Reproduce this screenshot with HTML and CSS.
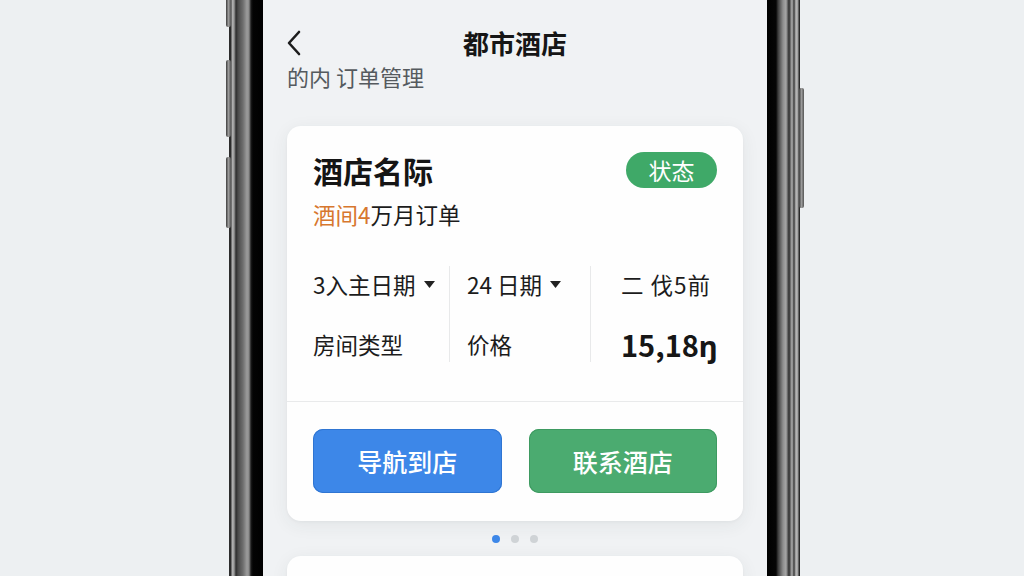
FILE: index.html
```html
<!DOCTYPE html>
<html lang="zh-CN">
<head>
<meta charset="utf-8">
<title>都市酒店</title>
<link rel="stylesheet" href="styles.css">
</head>
<body>
<div class="stage">
  <div class="phone">
    <span class="side-btn l1"></span>
    <span class="side-btn l2"></span>
    <span class="side-btn l3"></span>
    <span class="side-btn r1"></span>
    <div class="screen">
      <header class="topbar">
        <a class="back" aria-label="返回">
          <svg width="16" height="26" viewBox="0 0 16 26"><path d="M13 2 L3 13 L13 24" fill="none" stroke="#1c1c1c" stroke-width="2.6" stroke-linecap="round" stroke-linejoin="round"/></svg>
        </a>
        <h1 class="title">都市酒店</h1>
        <span></span>
      </header>
      <p class="subtitle">的内 订单管理</p>

      <section class="card">
        <div class="card-head">
          <h2 class="hotel">酒店名际</h2>
          <span class="pill">状态</span>
        </div>
        <p class="order"><span class="accent">酒间4</span>万月订单</p>

        <div class="info">
          <div class="col c1">
            <div class="cell">3入主日期 <svg class="caret" width="11" height="7" viewBox="0 0 11 7"><path d="M0 0 H11 L5.5 7 Z" fill="#222"/></svg></div>
            <div class="cell">房间类型</div>
          </div>
          <div class="col c2">
            <div class="cell">24 日期 <svg class="caret" width="11" height="7" viewBox="0 0 11 7"><path d="M0 0 H11 L5.5 7 Z" fill="#222"/></svg></div>
            <div class="cell">价格</div>
          </div>
          <div class="col c3">
            <div class="cell spaced">二 伐5前</div>
            <div class="cell price">15,18ŋ</div>
          </div>
        </div>

        <div class="actions">
          <button class="btn nav">导航到店</button>
          <button class="btn call">联系酒店</button>
        </div>
      </section>

      <div class="dots">
        <span class="dot active"></span>
        <span class="dot"></span>
        <span class="dot"></span>
      </div>

      <section class="card next"></section>
    </div>
  </div>
</div>
</body>
</html>
```

FILE: styles.css
```css
* { box-sizing: border-box; margin: 0; padding: 0; }

html, body {
  width: 1024px;
  height: 576px;
  overflow: hidden;
  background: #edf0f2;
  font-family: "Noto Sans CJK SC", "Noto Sans", sans-serif;
  color: #1c1c1c;
}

.stage {
  height: 576px;
  overflow: hidden;
  display: flex;
  padding-left: 229px;
}

.phone {
  position: relative;
  width: 571px;
  height: 700px;
  padding: 0 33px 0 34px;
  background: linear-gradient(to right,
    #2c2c2c 0px, #2c2c2c 2px, #b5b5b5 3px, #9a9a9a 5px, #2e2e2e 7px,
    #4a4a4a 9px, #6e6e6e 14px, #9c9c9c 18px, #8a8a8a 20px,
    #1a1a1a 22px, #030303 24px, #000 34px,
    #000 538px, #050505 547px, #3a3a3a 549px, #8e8e8e 554px,
    #a6a6a6 557px, #2c2c2c 560px, #b0b0b0 563px, #3a3a3a 565px,
    #bcbcbc 567px, #9a9a9a 569px, #2a2a2a 570px, #2a2a2a 571px);
}

.side-btn {
  position: absolute;
  width: 5px;
  background: linear-gradient(to right, #3c3c3c, #9a9a9a 50%, #555);
  border-radius: 2px;
}
.side-btn.l1 { left: -3px; top: -10px; height: 37px; }
.side-btn.l2 { left: -3px; top: 60px; height: 77px; }
.side-btn.l3 { left: -3px; top: 157px; height: 71px; }
.side-btn.r1 { right: -4px; top: 88px; height: 120px; }

.screen {
  height: 100%;
  background: #f0f2f4;
  padding: 27px 24px 0;
}

.topbar {
  display: grid;
  grid-template-columns: 1fr auto 1fr;
  align-items: center;
  height: 32px;
}
.back { display: flex; align-items: center; margin-left: -1px; }
.title {
  font-size: 26px;
  font-weight: 700;
  line-height: 32px;
  color: #161616;
}

.subtitle {
  margin-top: 3px;
  font-size: 22px;
  line-height: 28px;
  color: #555a5e;
}

.card {
  margin-top: 36px;
  background: #fefefe;
  border-radius: 14px;
  box-shadow: 0 4px 18px rgba(40, 50, 60, 0.07), 0 1px 3px rgba(40, 50, 60, 0.04);
  padding: 26px 26px 28px;
}

.card-head {
  display: flex;
  justify-content: space-between;
  align-items: center;
  height: 36px;
}
.hotel {
  font-size: 30px;
  font-weight: 700;
  line-height: 36px;
  color: #151515;
}
.pill {
  width: 91px;
  height: 36px;
  border-radius: 18px;
  background: #3fa968;
  color: #fff;
  font-size: 23px;
  line-height: 36px;
  text-align: center;
}

.order {
  margin-top: 11px;
  font-size: 22.5px;
  line-height: 30px;
  color: #1c1c1c;
}
.accent { color: #d7772e; }

.info {
  margin-top: 37px;
  display: grid;
  grid-template-columns: 136px 141px 1fr;
}
.col {
  display: flex;
  flex-direction: column;
  gap: 24px;
}
.c2, .c3 { border-left: 1.5px solid #e8e9ea; }
.c2 { padding-left: 17px; }
.c3 { padding-left: 30px; }

.cell {
  display: flex;
  align-items: center;
  gap: 8px;
  height: 36px;
  font-size: 22.5px;
  color: #1c1c1c;
  white-space: nowrap;
}
.cell.spaced { letter-spacing: 1px; }
.caret { margin-top: 1px; }
.price {
  font-size: 29px;
  font-weight: 700;
  color: #161616;
}

.actions {
  margin: 39px -26px 0;
  padding: 27px 26px 0;
  border-top: 1px solid #e9eaeb;
  display: grid;
  grid-template-columns: 1fr 1fr;
  gap: 27px;
}
.btn {
  height: 64px;
  border: none;
  border-radius: 10px;
  color: #fff;
  font-family: inherit;
  font-size: 25px;
  font-weight: 500;
}
.btn.nav { background: #3d87e8; box-shadow: inset 0 0 0 1px #2f75d2; }
.btn.call { background: #4bab70; box-shadow: inset 0 0 0 1px #3e9a61; }

.dots {
  margin-top: 14px;
  display: flex;
  justify-content: center;
  gap: 11px;
  height: 8px;
}
.dot {
  width: 8px;
  height: 8px;
  border-radius: 50%;
  background: #cfd3d6;
}
.dot.active { background: #3d87e8; }

.card.next {
  margin-top: 13px;
  height: 120px;
  padding: 0;
}
```
